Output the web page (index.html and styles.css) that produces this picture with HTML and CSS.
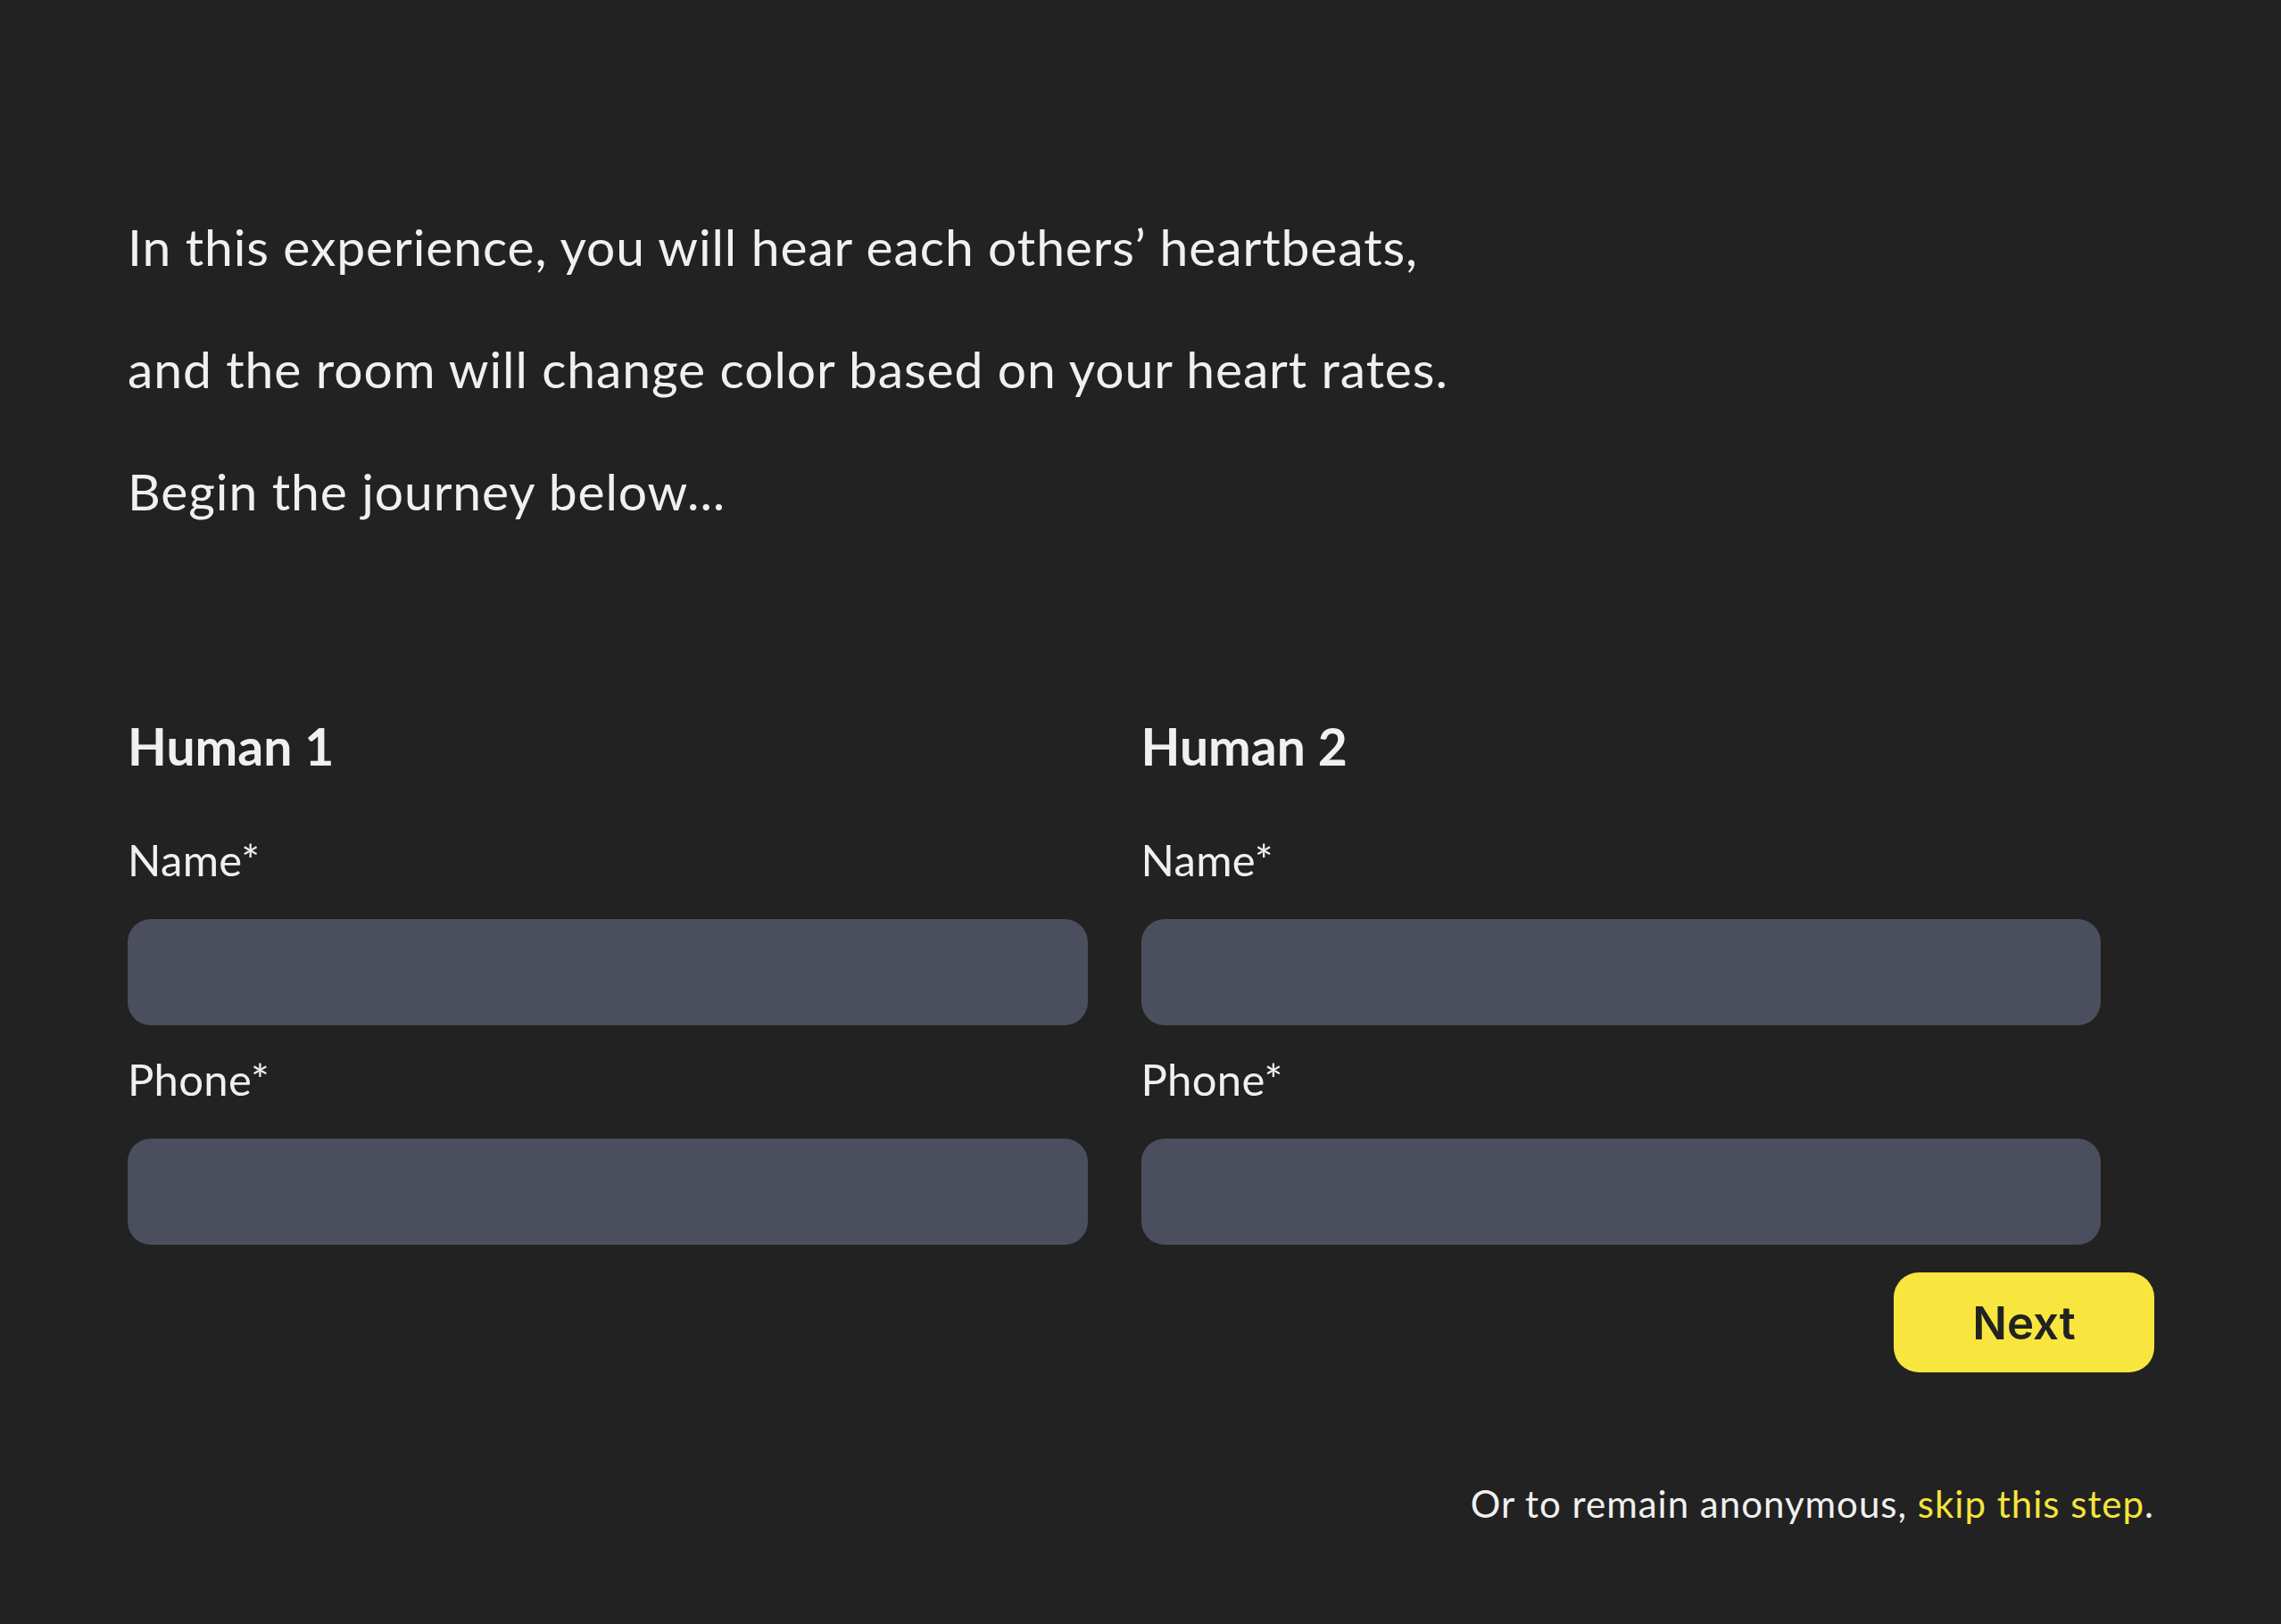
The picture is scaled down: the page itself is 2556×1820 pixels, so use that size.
FILE: index.html
```html
<!DOCTYPE html>
<html lang="en">
<head>
<meta charset="utf-8">
<title>Heartbeats</title>
<link rel="stylesheet" href="styles.css">
</head>
<body>
<main class="page">
  <section class="intro">
    <p class="intro-line">In this experience, you will hear each others’ heartbeats,</p>
    <p class="intro-line">and the room will change color based on your heart rates.</p>
    <p class="intro-line">Begin the journey below...</p>
  </section>

  <form class="form">
    <div class="humans">
      <div class="human">
        <h2 class="human-title">Human 1</h2>
        <label class="field-label" for="name1">Name*</label>
        <input class="field-input" id="name1" type="text">
        <label class="field-label" for="phone1">Phone*</label>
        <input class="field-input" id="phone1" type="tel">
      </div>
      <div class="human">
        <h2 class="human-title">Human 2</h2>
        <label class="field-label" for="name2">Name*</label>
        <input class="field-input" id="name2" type="text">
        <label class="field-label" for="phone2">Phone*</label>
        <input class="field-input" id="phone2" type="tel">
      </div>
    </div>
    <div class="actions">
      <button class="next-btn" type="button">Next</button>
    </div>
  </form>

  <p class="skip">Or to remain anonymous, <a class="skip-link" href="#">skip this step</a>.</p>
</main>
</body>
</html>
```

FILE: styles.css
```css
html, body {
  margin: 0;
  padding: 0;
  background: #222222;
}

body {
  font-family: "Lato", "Noto Sans", sans-serif;
  color: #f0f0f0;
  min-height: 1820px;
}

.page {
  padding: 242px 142px 0 143px;
}

.intro-line {
  margin: 0 0 69px 0;
  font-size: 57px;
  line-height: 68px;
  font-weight: 400;
  letter-spacing: 0.9px;
}

.intro-line:last-child {
  margin-bottom: 0;
}

.form {
  margin-top: 218px;
}

.humans {
  display: grid;
  grid-template-columns: 1fr 1fr;
}

.human {
  padding-right: 60px;
  display: flex;
  flex-direction: column;
}

.human-title {
  margin: 0 0 64px 0;
  font-size: 57px;
  line-height: 68px;
  font-weight: 700;
}

.field-label {
  display: block;
  font-size: 49px;
  line-height: 59px;
  font-weight: 400;
  letter-spacing: 0.3px;
  margin-bottom: 37px;
}

.field-input {
  display: block;
  box-sizing: border-box;
  width: 100%;
  height: 119px;
  border: none;
  border-radius: 26px;
  background: #4b4e5d;
  margin: 0 0 31px 0;
  padding: 0 30px;
  font-size: 44px;
  color: #f0f0f0;
  font-family: inherit;
}

.field-input:last-child {
  margin-bottom: 0;
}

.actions {
  display: flex;
  justify-content: flex-end;
  margin-top: 31px;
}

.next-btn {
  width: 292px;
  height: 112px;
  border: none;
  border-radius: 28px;
  background: #f8e63e;
  color: #222222;
  font-family: "Inter", "Liberation Sans", sans-serif;
  font-weight: 600;
  font-size: 51px;
  cursor: pointer;
}

.skip {
  margin: 122px 0 0 0;
  text-align: right;
  font-size: 42px;
  line-height: 50px;
  letter-spacing: 1px;
}

.skip-link {
  color: #f5e43c;
  text-decoration: none;
}
```
